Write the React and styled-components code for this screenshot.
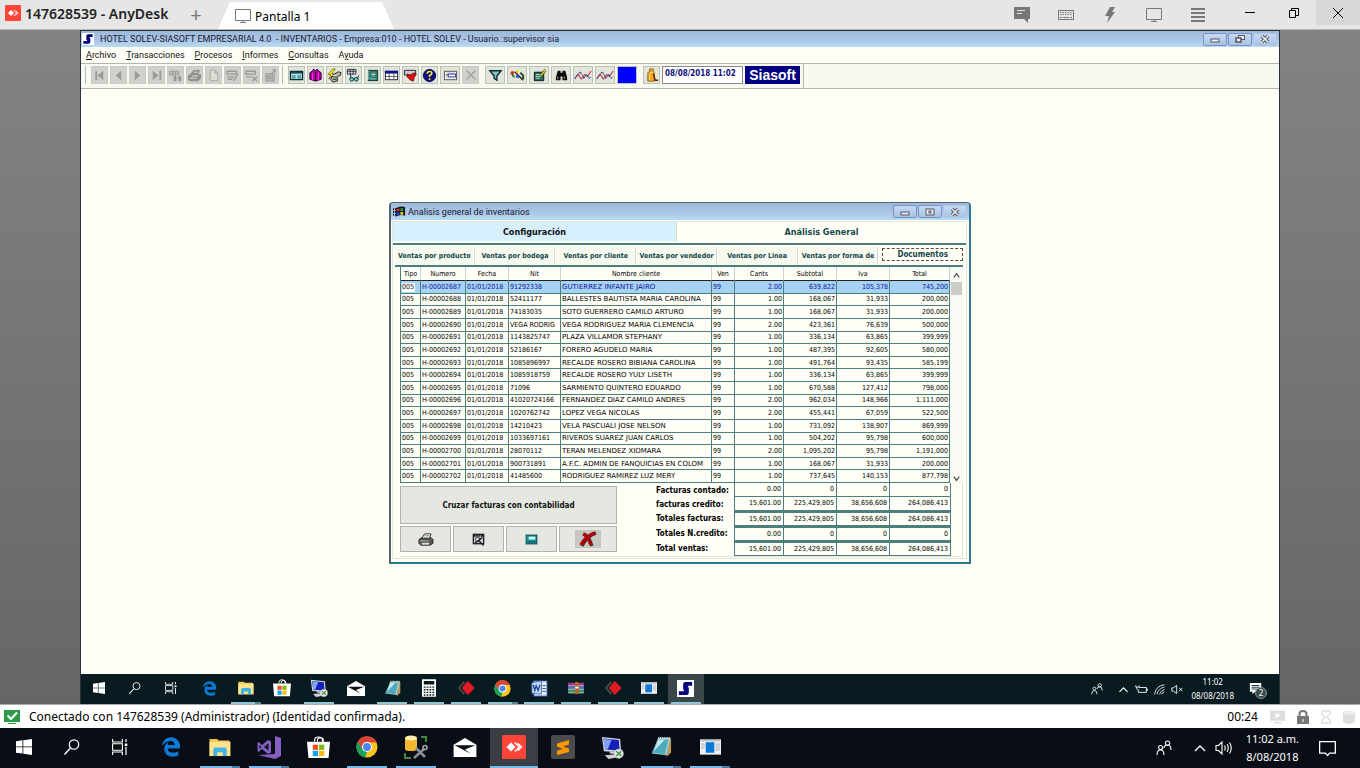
import React from 'react';
import styled, { createGlobalStyle, css } from 'styled-components';
import { FaEdgeLegacy } from 'react-icons/fa';

const ui = `"Noto Sans", "Open Sans", sans-serif`;
const caption = `Roboto, "Noto Sans", sans-serif`;
const tahoma = `"DejaVu Sans Condensed", "DejaVu Sans", sans-serif`;
const teal = '#4d807d';

const GlobalStyle = createGlobalStyle`
  * { box-sizing: border-box; }
  body { margin: 0; font-family: ${ui}; color: #000; }
  button { font: inherit; color: inherit; border: 0; padding: 0; background: none; }
  svg { display: block; }
`;

/* ---------- icons ---------- */

const shapes = {
  anydesk: ['0 0 16 16', <><rect width="16" height="16" rx="1" fill="#ff4438" /><path d="M6 5 9 8 6 11 3 8z" fill="#fff" /><path d="M8.500 5l3 3-3 3M10.500 5.500 13 8l-2.500 2.500" fill="none" stroke="#fff" strokeWidth=".9" /></>],
  monitor: ['0 0 16 16', <path d="M.5 1.500h15v11H.5zM8 12.500v2M5 14.500h6" fill="none" stroke="#777" />],
  chat: ['0 0 16 16', <><path d="M0 0h16v12h-2v4l-4-4H0z" fill="#777" /><path d="M3 3.500h8M3 6.500h5" stroke="#e5e5e5" /></>],
  keyboard: ['0 0 16 16', <><rect x=".5" y="3.500" width="15" height="9" fill="none" stroke="#777" /><path d="M2 5.500h12M2 7.500h12" stroke="#777" strokeDasharray="1.500 1" /><path d="M2 10.500h2m1 0h6m1 0h2" stroke="#777" /></>],
  bolt: ['0 0 16 16', <path d="M8 0h5l-3 5h3L5 16l2-7H3z" fill="#777" />],
  menu: ['0 0 16 16', <path d="M1 2h14M1 6h14M1 10h14M1 14h14" stroke="#777" strokeWidth="2" />],
  min: ['0 0 16 16', <path d="M3 7.500h10" stroke="#000" />],
  restore: ['0 0 16 16', <path d="M3.500 5.500h6v7h-6zM5.500 5.500v-2h7v7h-3" fill="none" stroke="#000" />],
  close: ['0 0 16 16', <path d="M3 3l10 10M13 3 3 13" stroke="#000" />],
  winMin: ['0 0 12 10', <rect x="2" y="5" width="8" height="3" fill="#eee" stroke="#556" />],
  winRestore: ['0 0 12 10', <><rect x="4.500" y="1.500" width="6" height="4" fill="#eee" stroke="#556" /><rect x="2" y="4" width="5" height="4" fill="#eee" stroke="#556" strokeWidth="1.500" /></>],
  winMax: ['0 0 12 10', <><rect x="2" y="2" width="8" height="6" fill="#eee" stroke="#556" /><rect x="5" y="4" width="2" height="2" fill="none" stroke="#556" /></>],
  winClose: ['0 0 12 10', <><path d="M3 2l6 6M9 2 3 8" stroke="#556" strokeWidth="3.500" /><path d="M3 2l6 6M9 2 3 8" stroke="#eee" strokeWidth="1.500" /></>],
  sia: ['0 0 18 18', <><rect width="18" height="18" fill="#fff" /><path d="M16 2H9Q6.500 2 6.500 4.500V9q0 1.500 1 2v1H2v4h7.500q3 0 3-3V9q0-1.500-1-2V6H16z" fill="#000080" /></>],
  flag: ['0 0 14 12', <><path d="M0 3h3M0 6h3M0 9h3" stroke="#111" strokeDasharray="1 1" strokeWidth="2" /><path d="M3 2q5-3 10-1v9q-5-2-10 1z" fill="#111" /><path d="M4 3l3-1v3H4z" fill="#e03020" /><path d="M8 2h3v3H8z" fill="#30a040" /><path d="M4 6h3v3L4 10z" fill="#2040d0" /><path d="M8 6h3v3H8z" fill="#e0d020" /></>],
  first: ['0 0 16 16', <><path d="M4.500 3v10" stroke="#999c96" strokeWidth="2" /><path d="M12 3v10L6 8z" fill="#999c96" /></>],
  prev: ['0 0 16 16', <path d="M11 3v10L5 8z" fill="#999c96" />],
  next: ['0 0 16 16', <path d="M5 3v10l6-5z" fill="#999c96" />],
  last: ['0 0 16 16', <><path d="M12 3v10" stroke="#999c96" strokeWidth="2" /><path d="M4 3v10l6-5z" fill="#999c96" /></>],
  gridFind: ['0 0 16 16', <><path d="M1.500 3.500h10v4h-10zM2 5.500h9M5 3v5M8 3v5" fill="none" stroke="#999c96" /><path d="M6 14V9l2-1 1 2h2l1-2 2 1v5h-3v-3H9v3z" fill="#999c96" /></>],
  gprint: ['0 0 16 16', <><path d="M1 8l3-2 3-4h7l-2 4 3 1v4l-3 3H3l-2-2z" fill="#8f928c" /><path d="M7.500 4.500h4M5 8.500h7M3 11h7" stroke="#e0e2da" /></>],
  page: ['0 0 16 16', <path d="M4.500 2.500h5l3 3v8h-8zM9.500 2.500v3h3" fill="#dcdfd6" stroke="#a4a7a0" />],
  gridEdit: ['0 0 16 16', <path d="M2 3.500h10v3H2zM2 9.500h8M3 12h5M14 6l-5 8" fill="none" stroke="#999c96" strokeWidth="1.500" />],
  gridDel: ['0 0 16 16', <path d="M2 3.500h10v3H2zM2 9.500h6M9 9l5 5M14 9l-5 5" fill="none" stroke="#999c96" strokeWidth="1.500" />],
  gridOut: ['0 0 16 16', <><path d="M3 6h9v8H3z" fill="#b8bbb4" stroke="#999c96" /><path d="M4 9h7M4 11h7" stroke="#85887f" strokeDasharray="1.500 1" /><path d="M9 6l4-4M10 2h3v3" stroke="#8c8f89" fill="none" /></>],
  card: ['0 0 16 16', <><path d="M1.500 3.500h13v9h-13z" fill="#a5e6e4" stroke="#123" strokeWidth="1.300" /><path d="M2 5h12" stroke="#1b4c50" strokeWidth="2" /><path d="M3 8.500h4M9 8.500h4M3 10.500h4M9 10.500h4" stroke="#156068" /></>],
  gift: ['0 0 16 16', <><path d="M2 5l3-2 1-2 2 2 2-2 1 2 3 2v7l-6 2-6-2z" fill="#b000a0" stroke="#300038" /><path d="M5 5v8M11 5v8" stroke="#ff40e8" /><path d="M8 4v10" stroke="#200020" /></>],
  handBolt: ['0 0 16 16', <><path d="M6 1 1 7h3l-2 5 6-6H5l4-5z" fill="#f4ec20" stroke="#54520c" strokeWidth=".7" /><path d="M7 7l5-3 3 1-1 3-3 1M5 9l6 1v4l-5 1-2-3z" fill="#b9b9aa" stroke="#222" /><path d="M6 12h4" stroke="#222" /></>],
  gridGlass: ['0 0 16 16', <><path d="M1.500 1.500h9v5h-9z" fill="#dde" stroke="#334" /><path d="M1 3.500h10M4.500 2v5M7.500 2v5M5 7v4" stroke="#334" /><circle cx="6" cy="12" r="2" fill="#6dd" stroke="#023" /><circle cx="11" cy="12" r="2" fill="#6dd" stroke="#023" /><path d="M12 11l2-3" stroke="#222" /></>],
  notebook: ['0 0 16 16', <><rect x="3.500" y="2.500" width="10" height="11" fill="#2f8c80" stroke="#10302c" /><path d="M3 3v10" stroke="#fff" strokeDasharray="1 1" strokeWidth="2" /><path d="M6.500 4.500h5v5h-5z" fill="#c8f0e0" stroke="#10302c" strokeWidth=".7" /><path d="M7 6h4M7 8h4" stroke="#247" strokeWidth=".7" /><path d="M6 11.500h6" stroke="#bfe" strokeDasharray="1 1" /></>],
  grid: ['0 0 16 16', <><rect x="1.500" y="3.500" width="13" height="9" fill="#fff" stroke="#223" /><path d="M1 4.500h14" stroke="#10108c" strokeWidth="3" /><path d="M2 9h12M5.500 6v6M10.500 6v6" stroke="#556" /></>],
  redDown: ['0 0 16 16', <><path d="M1.500 2.500h12v5h-12z" fill="#ccd" stroke="#222" /><path d="M5 6l2 2 5-3 2 2-2 3-1 4-3-1-4-4z" fill="#e01010" stroke="#500" strokeWidth=".7" /></>],
  help: ['0 0 16 16', <><circle cx="8" cy="8" r="6.500" fill="#0a1080" stroke="#000050" /><path d="M5.500 6.200q0-2.500 2.500-2.500t2.500 2.200Q10.500 7.200 8 8v1.700M8 11v1.700" fill="none" stroke="#ffee30" strokeWidth="1.700" /></>],
  form: ['0 0 16 16', <><rect x="1.500" y="3.500" width="13" height="9" fill="#eee" stroke="#555" /><path d="M4 5.500h8" stroke="#bbb" /><rect x="5.500" y="6.500" width="8" height="3" fill="#fff" stroke="#2030a0" /><path d="M3 7.500h2" stroke="#333" /></>],
  gcross: ['0 0 16 16', <path d="M3 3l10 10M13 3 3 13" stroke="#a4a8a0" strokeWidth="1.700" />],
  funnel: ['0 0 16 16', <path d="M2 3h12L9.500 8.500V13l-3-2V8.500z" fill="#7fc4bd" stroke="#102a35" strokeWidth="1.500" />],
  paint: ['0 0 16 16', <><path d="M1 5l3 4M5 4l9 9" stroke="#222" strokeWidth="1.500" /><circle cx="2.500" cy="5" r="1.800" fill="#e02020" /><circle cx="8" cy="4" r="1.700" fill="#e8e020" /><circle cx="8" cy="9" r="1.700" fill="#3050e0" /><path d="M11 5l3 3v4" stroke="#205020" fill="none" strokeWidth="2" /><circle cx="4" cy="9" r="1.300" fill="#30a040" /></>],
  noteBolt: ['0 0 16 16', <><path d="M2.500 4.500h10v9h-10z" fill="#276858" stroke="#112" /><path d="M4 7h6M4 9h6M4 11h4" stroke="#bfe8d8" /><path d="M14 1l-6 7 2 1 5-6" fill="#e8e020" stroke="#222" strokeWidth=".7" /></>],
  binoculars: ['0 0 16 16', <><path d="M4 3h3v2h2V3h3l2 7v3H9V9H7v4H2v-3z" fill="#0a0a0a" /><path d="M4 9v3M11 9v3" stroke="#9aa" /></>],
  wave: ['0 0 20 16', <><path d="M1 11l4-4 3 5 4-5 3 2 4-6" fill="none" stroke="#d04040" strokeWidth="1.300" /><path d="M1 12l2-4 4-4 4 7 3-4 3 4 2-1" fill="none" stroke="#3a4aa0" strokeWidth="1.200" strokeDasharray="2 .7" /></>],
  lighter: ['0 0 16 16', <><path d="M4 5l2-1V1h4v3l1 1v9H4z" fill="#f0a818" stroke="#6d4400" strokeWidth=".7" /><path d="M6 5h4M6 7v6" stroke="#ffe48a" /><path d="M10 6l2 7h3" stroke="#5a1c10" fill="none" strokeWidth="1.500" /></>],
  printer: ['0 0 18 16', <><path d="M2 8l3-2h10l2 2v4l-3 2H4l-2-2z" fill="#555" stroke="#222" /><path d="M5 7l3-5h7l-2 5z" fill="#f4f4f4" stroke="#333" /><path d="M8 4h5M7 6h5" stroke="#888" /><path d="M3 9.500h10" stroke="#bbb" /><path d="M5 12.500h8" stroke="#ddd" strokeWidth="2" /><path d="M9 9.500h2" stroke="#0c3" /><path d="M12 9.500h2" stroke="#d33" /></>],
  preview: ['0 0 16 16', <><rect x="2.500" y="2.500" width="11" height="10" fill="#cfcfd4" stroke="#1c1c24" strokeWidth="1.400" /><path d="M3 4h10" stroke="#1c1c24" strokeWidth="2" strokeDasharray="2 .6" /><circle cx="7" cy="8" r="2.300" fill="#eee" stroke="#222" /><path d="M8.500 9.500l5 5M4 12l8-6" stroke="#222" strokeWidth="1.500" /></>],
  calcTeal: ['0 0 16 16', <><rect x="1" y="2" width="14" height="12" fill="#b4c6c6" /><rect x="2.500" y="3.500" width="11" height="9" fill="#189a9a" stroke="#0c4c58" /><rect x="5" y="5" width="7" height="3" fill="#d4fff8" /><path d="M4 10.500h8" stroke="#024" strokeDasharray="2 1" /></>],
  redX: ['0 0 26 18', <><rect width="26" height="18" fill="#c6c7c2" /><path d="M7 16Q12 6 21 3M9 4q5 2 8 12" fill="none" stroke="#333" strokeWidth="3" /><path d="M6 15Q11 6 20 3M8 4q5 2 8 11" fill="none" stroke="#a80808" strokeWidth="3.500" /></>],
  windows: ['0 0 16 16', <path d="M0 2.200 6.500 1.300v6.200H0zM7.300 1.200 16 0v7.500H7.300zM0 8.300h6.500v6.200L0 13.700zM7.300 8.300H16V16l-8.700-1.200z" fill="#fff" />],
  search: ['0 0 16 16', <><circle cx="10" cy="5.500" r="4.700" fill="none" stroke="#fff" strokeWidth="1.200" /><path d="M6.500 9 .5 15.500" stroke="#fff" strokeWidth="1.400" /></>],
  taskview: ['0 0 16 16', <><path d="M.6 0v3h9.800V0M.6 16v-3h9.800v3M.6 4.800h9.800v6.400H.6z" fill="none" stroke="#fff" strokeWidth="1.100" /><path d="M14 0v3M14 8v8" stroke="#fff" strokeWidth="1.200" /><rect x="12.800" y="4.500" width="2.500" height="2.500" fill="#fff" /></>],
  folder: ['0 0 22 20', <><path d="M0 1h8l1.500 1.500H21V19H0z" fill="#f5c84c" /><path d="M0 4h22v15H0z" fill="#ffe38f" /><path d="M4 19v-7q0-2 2-2h10q2 0 2 2v7h-4v-4H8v4z" fill="#3db3e8" /></>],
  vs: ['0 0 24 24', <><path d="M18 1l6 2v18l-6 3L1 20l17-1z" fill="#865fc5" /><path d="M1.500 7 5 10l6-5 3 1.500v11L11 19l-6-5-3.500 3L.5 16V8zM2.500 10v4l2-2zM7 12l4.500 3.500v-7z" fill="#865fc5" fillRule="evenodd" /></>],
  store: ['0 0 24 24', <><path d="M8 6V4q0-3 4-3t4 3v2M11 6V4q0-2 3-2t3 2v2" fill="none" stroke="#fff" strokeWidth="1.200" /><path d="M0 6h24l-1.500 17H1.500z" fill="#fff" /><path d="M6 9h5.500v5.500H6z" fill="#f25022" /><path d="M12.500 9H18v5.500h-5.500z" fill="#7fba00" /><path d="M6 15.500h5.500V21H6z" fill="#00a4ef" /><path d="M12.500 15.500H18V21h-5.500z" fill="#ffb900" /></>],
  chrome: ['0 0 24 24', <><circle cx="12" cy="12" r="11.500" fill="#fbc61c" /><path d="M2 6.200A11.500 11.500 0 0 1 22.500 7H12L7 15z" fill="#dc4437" /><path d="M2 6.200 7.300 15 12 17l-1.800 6.400A11.500 11.500 0 0 1 2 6.200z" fill="#1aa15f" /><circle cx="12" cy="12" r="5.500" fill="#fff" /><circle cx="12" cy="12" r="4.300" fill="#4587f4" /></>],
  dbTools: ['0 0 24 24', <><path d="M1 3v11q0 2 6 2t6-2V3z" fill="#f6b830" /><ellipse cx="7" cy="3" rx="6" ry="2.500" fill="#fff0b0" /><path d="M17 2h5v5M1 18v5h6" fill="none" stroke="#3c8c3c" strokeWidth="2" /><path d="M10 23l10-9M12 13l9 9" stroke="#8c9094" strokeWidth="2.500" /><circle cx="21" cy="12.500" r="2" fill="none" stroke="#a8acb0" strokeWidth="1.500" /></>],
  mail: ['0 0 24 20', <><path d="M0 7l12-7 12 7v13H0z" fill="#fff" /><path d="M1 7.500h22L12 12l6 4.500z" fill="#0a0f16" /></>],
  sublime: ['0 0 24 24', <><rect width="24" height="24" rx="2" fill="#4b4b4b" /><path d="M18 5v4.500l-6 2 6 2v3.500L6 20v-4.300l6-2-6-2V8.500z" fill="#ff9800" /></>],
  putty: ['0 0 24 24', <><path d="M1 1l19 2 1 14-18-1z" fill="#d3d6de" /><path d="M2.500 2.500l16 1.700 1 11-15-1z" fill="#1420b8" /><path d="M3 3l8 1-4 10-3-.3z" fill="#7fa2f4" /><path d="M9 16l6 1v2l-6-1zM4 20l12-1 3 3-11 2z" fill="#d0d2d4" /><circle cx="18.500" cy="18.500" r="5" fill="#dfe9dd" stroke="#aaa" strokeWidth=".5" /><path d="M16 16l2.500 2.500L16 21M21 16l-2 2 2 3" fill="none" stroke="#3c8c3c" strokeWidth="1.400" /></>],
  notepad: ['0 0 24 24', <><path d="M20 2l3 1v15l-5 5z" fill="#b99a5a" /><path d="M9 2h13l-4 19-16-2z" fill="#9ed0d8" /><path d="M9 4h11l-4 16-14-2z" fill="#4fa9bc" /><path d="M9 4h7L4 17z" fill="#c3e6ea" /><path d="M9 2h13" stroke="#ddd" strokeWidth="2" strokeDasharray="1 1" /></>],
  appWin: ['0 0 22 16', <><rect width="22" height="16" fill="#f1f1f1" /><path d="M1 1.500h20" stroke="#9ab" /><rect x="6" y="3" width="9" height="11" fill="#0a78d6" /><path d="M1 5h4M1 7h4M1 9h4M16 5h5M16 7h5M16 9h5M16 11h5" stroke="#99a" strokeWidth=".7" /></>],
  calc: ['0 0 16 20', <><rect width="16" height="20" fill="#fff" /><path d="M2 2h12v4H2z" fill="#071a1e" /><path d="M2 9h12M2 12h12M2 15h12M2 18h12" stroke="#071a1e" strokeWidth="1.700" strokeDasharray="2 1.300" /></>],
  redDiamond: ['0 0 20 16', <><path d="M8 1 2 8l6 7" fill="none" stroke="#4b4b4b" strokeWidth="2" /><path d="M12 0l8 8-8 8-7-8z" fill="#e01b24" /></>],
  word: ['0 0 18 18', <><rect x="3" y="1" width="14" height="16" fill="#e8f1fc" stroke="#2a5699" /><path d="M12 6h4M12 9h4M12 12h4" stroke="#2a5699" /><path d="M1 3l10-2v14L1 14z" fill="#c9dcf6" stroke="#4a76b9" /><path d="M2.500 5l1.500 6L5.500 6l2 5L9.500 5" fill="none" stroke="#204f9a" strokeWidth="1.500" /></>],
  winrar: ['0 0 20 16', <><path d="M1 2h18v4H1z" fill="#a13a8c" /><path d="M1 6h18v4H1z" fill="#5a6fb8" /><path d="M1 10h18v4H1z" fill="#3a9658" /><path d="M1 5.500h18M1 9.500h18M1 13.500h18" stroke="#ddd" strokeWidth=".8" /><path d="M9 1h4v14H9z" fill="#b5642a" /><path d="M9 7.500h4" stroke="#ffe" strokeWidth="2" /></>],
  people: ['0 0 16 16', <path d="M1 15q0-5 3.500-5t3.500 5M8 8q0-3 3.500-3T15 10M4.500 5.500a2 2 0 1 0 .1 4 2 2 0 1 0-.1-4zM11.500 1a2.200 2.200 0 1 0 .1 4.400 2.200 2.200 0 1 0-.1-4.400z" fill="none" stroke="#fff" strokeWidth="1.100" />],
  chevron: ['0 0 16 16', <path d="M3 11l5-5 5 5" fill="none" stroke="#fff" strokeWidth="1.400" />],
  battery: ['0 0 16 16', <path d="M5 5.500h9v6H4v-3M14 7.500h1.500v2M1 3v2h4V3M2 5v2q0 1 2 1" fill="none" stroke="#fff" strokeWidth="1.100" />],
  wifi: ['0 0 16 16', <path d="M2 14Q3 4 14 2M5 14q1-7 9-9M8 14q1-4 6-6M11 14q0-2 3-3" fill="none" stroke="#ddd" strokeWidth="1.200" />],
  mute: ['0 0 16 16', <path d="M1 6h2l4-3v10l-4-3H1zM10 6l4 4M14 6l-4 4" fill="none" stroke="#fff" strokeWidth="1.100" />],
  sound: ['0 0 18 16', <path d="M1 5.500h2.500L7 2v12l-3.500-3.500H1zM9.500 5.500q1.500 2.500 0 5M12 4q2.500 4 0 8M14.500 2.500q3.500 5.500 0 11" fill="none" stroke="#fff" strokeWidth="1.100" />],
  bubble: ['0 0 16 16', <path d="M.6 1.600h14.800v10.800H10l-2 2.200-2-2.200H.6z" fill="none" stroke="#fff" strokeWidth="1.200" />],
  notes: ['0 0 16 16', <><path d="M1 1h13v10H7l-3 3v-3H1z" fill="#fff" /><path d="M3 4h9M3 6h9M3 8h6" stroke="#0b2226" /></>],
  check: ['0 0 16 14', <><rect width="16" height="12" fill="#2d9a47" /><path d="M4 14h8" stroke="#2d9a47" strokeWidth="2" /><path d="M3.500 5.500 7 9l6-6.500" fill="none" stroke="#fff" strokeWidth="2" /></>],
  play: ['0 0 16 14', <><path d="M0 0h16v11H0zM4 12h8v2H4z" fill="#dedede" /><path d="M6 2.500l5 3-5 3z" fill="#fff" /></>],
  lock: ['0 0 12 14', <><path d="M2.500 7V4q0-3 3.500-3t3.500 3v3" fill="none" stroke="#777" strokeWidth="2" /><path d="M0 6h12v8H0z" fill="#777" /><path d="M6 9v3" stroke="#fff" /></>],
  hourglass: ['0 0 10 14', <path d="M1 1h8v3L6 7l3 3v3H1v-3l3-3-3-3z" fill="none" stroke="#dedede" strokeWidth="1.400" />],
  disk: ['0 0 12 14', <><path d="M0 3v9q6 4 12 0V3z" fill="#dedede" /><ellipse cx="6" cy="3" rx="6" ry="2" fill="#eee" stroke="#ddd" strokeWidth=".5" /></>],
  up: ['0 0 10 10', <path d="M2 7l3-4 3 4" fill="none" stroke="#555" strokeWidth="1.500" />],
  down: ['0 0 10 10', <path d="M2 3l3 4 3-4" fill="none" stroke="#555" strokeWidth="1.500" />],
};

function Icon({ name, w = 16, h = w }) {
  if (name === 'edge') return <FaEdgeLegacy size={w} color="#0a7ad8" aria-hidden="true" />;
  const [box, art] = shapes[name];
  return <svg width={w} height={h} viewBox={box} aria-hidden="true">{art}</svg>;
}

/* ---------- page frame ---------- */

const Page = styled.div`
  min-height: 100vh;
  display: flex;
  flex-direction: column;
`;

const TopBar = styled.header`
  height: 30px;
  display: flex;
  align-items: stretch;
  background: #e6e6e6;
  border-bottom: 1px solid #b4b8b4;
`;

const AppTitle = styled.h1`
  margin: 0;
  width: 185px;
  padding: 0 0 3px 5px;
  display: flex;
  align-items: center;
  gap: 4px;
  font-size: 14px;
  font-weight: 600;
  color: #222;
  white-space: nowrap;
`;

const AddTab = styled.button`
  width: 22px;
  margin-right: 11px;
  font-size: 20px;
  line-height: 28px;
  color: #777;
`;

const SessionTab = styled.button`
  width: 176px;
  margin-top: 2px;
  padding: 1px 0 0 17px;
  display: flex;
  align-items: center;
  gap: 4px;
  background: #fff;
  clip-path: polygon(12px 0, 164px 0, 100% 100%, 0 100%);
  font-size: 12px;
`;

const TopTools = styled.div`
  margin-left: auto;
  display: flex;
  align-items: center;
  gap: 28px;
  padding-right: 22px;
`;

const WindowButton = styled.button`
  width: 44px;
  height: 25px;
  display: grid;
  place-items: center;
  background: ${(p) => (p.$shade ? '#d8d8d8' : 'transparent')};
`;

const Stage = styled.main`
  flex: 1;
  display: flex;
  padding: 0 80px;
  background: linear-gradient(#838383, #666);
`;

const Remote = styled.section`
  flex: 1;
  min-width: 0;
  display: flex;
  flex-direction: column;
  border: 1px solid #2a3438;
  border-bottom: 0;
  background: #fffff7;
`;

const Caption = styled.div`
  height: ${(p) => p.$h}px;
  padding: 0 2px 0 ${(p) => p.$start}px;
  display: flex;
  align-items: center;
  gap: ${(p) => p.$gap}px;
  background: linear-gradient(#9cb9d8, #aec6ea 60%, #b4dcee);
  font: 9px/12px ${caption};
  color: #15202c;
  white-space: pre;
`;

const CaptionButtons = styled.div`
  margin-left: auto;
  display: flex;
  gap: 1px;
`;

const CaptionButton = styled.button`
  width: 24px;
  height: 13px;
  display: grid;
  place-items: center;
  border: 1px solid ${(p) => (p.$soft ? '#b3c2ea' : '#7d90c4')};
  border-radius: 2px;
  background: linear-gradient(#c5d9f3, #a8c3e4);
`;

const MenuBar = styled.nav`
  height: 16px;
  padding-left: 5px;
  display: flex;
  align-items: center;
  gap: 10px;
  font: 9px/12px ${caption};
  a { color: #111; text-decoration: none; }
`;

const ToolBar = styled.div`
  height: 26px;
  display: flex;
  align-items: center;
  gap: 3px;
  padding: 0 0 2px 4px;
  background: #f7faf0;
  border-top: 1px solid #b3b8ae;
  border-bottom: 1px solid #b3b8ae;
`;

const ToolGroup = styled.div`
  display: flex;
  gap: 2px;
  height: 18px;
  padding-left: 5px;
  border-left: 1px solid #b7bbb0;
`;

const LooseGroup = styled(ToolGroup)`
  border-left: 0;
  padding-left: 3px;
`;

const ToolButton = styled.button`
  width: ${(p) => (p.$wide ? 20 : 17)}px;
  height: 18px;
  display: grid;
  place-items: center;
  background: ${(p) => (p.disabled ? '#cfd2ca' : p.$fill || '#e2e6da')};
  border: 1px solid ${(p) => (p.disabled ? '#c9ccc4' : '#bcc2b6')};
`;

const Clock = styled.input`
  width: 81px;
  height: 18px;
  padding: 0 1px 3px 2px;
  border: 1px solid #888;
  background: #fff;
  color: #10107c;
  font: bold 8px ${tahoma};
`;

const Brand = styled.div`
  width: 55px;
  height: 18px;
  background: #000080;
  color: #fff;
  text-align: center;
  font: bold 14px/18px "Liberation Sans", sans-serif;
`;

const BarEnd = styled.div`
  align-self: stretch;
  width: 1px;
  margin: 0 0 -2px;
  background: #b3b8ae;
`;

const Workspace = styled.div`
  flex: 1;
  min-height: 480px;
  position: relative;
`;

/* ---------- inventory window ---------- */

const Dialog = styled.section`
  position: absolute;
  left: 308px;
  top: 113px;
  width: 582px;
  border: 1px solid #50666c;
  border-width: 1px 2px 2px;
  border-radius: 4px 4px 0 0;
  border-right-color: #2c7890;
  border-bottom-color: #2c7890;
  background: #fffff7;
  overflow: hidden;
  font-family: ${tahoma};
`;

const DialogBody = styled.div`
  margin: 1px 2px 3px 1px;
  padding-bottom: 1px;
  border: 1px solid #e0e6d8;
`;

const TabRow = styled.div`
  display: flex;
  height: 23px;
  border-bottom: 2px solid ${teal};
`;

const MainTab = styled.button`
  flex: 1;
  height: 19px;
  font-size: 9px;
  font-weight: bold;
  ${(p) => (p.$active
    ? css`color: #14474a;`
    : css`flex: 0 0 284px; background: #d6f0fd; color: #111; border-right: 1px solid #d6dad0;`)}
`;

const SubTabRow = styled(TabRow)`
  margin: 1px 3px 0 2px;
  height: 21px;
  gap: 1px;
`;

const SubTab = styled.button`
  flex: 1 1 0;
  min-width: 0;
  height: 18px;
  margin-top: 1px;
  overflow: hidden;
  white-space: nowrap;
  font-size: 7px;
  font-weight: bold;
  color: #14474a;
  background: #f5f9ee;
  border-right: 1px solid #d8dcd0;
  ${(p) => p.$active && css`
    margin: 2px 0 0 3px;
    height: 13px;
    font-size: 8px;
    background: none;
    border: 1px dashed #5a4a4a;
    line-height: 10px;
  `}
`;

const Grid = styled.div`
  margin: 0 3px 0 7px;
  display: flex;
`;

const DataTable = styled.table`
  width: 550px;
  height: 216px;
  table-layout: fixed;
  border-collapse: separate;
  border-spacing: 0;
  border-left: 1px solid ${teal};
  font-size: 7px;
  line-height: 9px;
  th {
    height: 14px;
    padding: 1px 0 0;
    font-weight: normal;
    border-right: 1px solid #c9d6d0;
    border-bottom: 1px solid #222;
  }
  td {
    padding: 1px 1px 0;
    border-right: 1px solid ${teal};
    border-bottom: 1px solid ${teal};
    overflow: hidden;
    white-space: nowrap;
  }
  td:nth-child(5) { font-family: "DejaVu Sans", sans-serif; }
  td:nth-child(n + 7) { text-align: right; }
`;

const DataRow = styled.tr`
  ${(p) => p.$selected && css`background: #a6d3f3; color: #1010a0;`}
`;

const TypeInput = styled.input`
  display: block;
  width: 13px;
  height: 9px;
  padding: 0;
  border: 0;
  background: #fff;
  font: inherit;
  color: #111;
`;

const ScrollBar = styled.div`
  width: 13px;
  padding-top: 4px;
  display: flex;
  flex-direction: column;
  align-items: center;
  background: #fafaf4;
`;

const Thumb = styled.div`
  width: 11px;
  height: 13px;
  margin: 2px 0 auto;
  background: #cdcdc8;
`;

const Footer = styled.div`
  margin: 0 3px 0 7px;
  display: flex;
  justify-content: space-between;
  padding-right: 11px;
  border: 1px solid #e2e6da;
  border-width: 0 1px 1px 0;
`;

const Actions = styled.div`
  width: 217px;
  padding-top: 3px;
  display: grid;
  grid-template-columns: repeat(3, 51px) 1fr;
  align-content: start;
  gap: 2px;
`;

const ActionButton = styled.button`
  height: ${(p) => (p.$main ? 38 : 26)}px;
  display: grid;
  place-items: center;
  border: 1px solid #b0b3ab;
  background: #e5e8e0;
  font-size: 8px;
  font-weight: bold;
  color: #111;
  ${(p) => p.$main && css`grid-column: 1 / -1;`}
`;

const Totals = styled.table`
  width: 295px;
  table-layout: fixed;
  border-collapse: separate;
  border-spacing: 0;
  font-size: 7px;
  line-height: 9px;
  th { padding: 0; text-align: left; font-size: 8px; white-space: nowrap; border-right: 1px solid ${teal}; }
  td { padding: 0 2px 0 0; text-align: right; border-right: 1px solid ${teal}; border-bottom: 1px solid ${teal}; }
`;

const TotalRow = styled.tr`
  height: ${(p) => (p.$group ? 15 : 14)}px;
  td { ${(p) => p.$group && css`border-top: 2px solid ${teal};`} }
`;

/* ---------- bars at the bottom ---------- */

const TaskBar = styled.footer`
  height: ${(p) => (p.$small ? 30 : 40)}px;
  display: flex;
  background: ${(p) => (p.$small ? '#071b20' : '#090d15')};
  color: #fff;
`;

const SystemKeys = styled.div`
  display: flex;
  width: ${(p) => (p.$small ? 110 : 147)}px;
`;

const TaskApps = styled.div`
  display: flex;
  justify-content: space-between;
  width: ${(p) => (p.$small ? 513 : 587)}px;
`;

const TaskButton = styled.button`
  width: ${(p) => (p.$small ? 36 : 48)}px;
  height: 100%;
  padding: ${(p) => (p.$small ? '0 3px' : p.$active ? '0' : '0 4px')};
  display: grid;
  grid-template-rows: 1fr 2px;
  place-items: center;
  background: ${(p) => (p.$active ? (p.$small ? '#3a4648' : '#3b3e44') : 'none')};
  &::after {
    content: '';
    justify-self: stretch;
    height: 2px;
    background: ${(p) => {
    if (!p.$open) return 'transparent';
    const [on, more] = p.$small ? ['#8fc6d4', '#5d8893'] : ['#76b9ed', '#4c7aa0'];
    return p.$open === 2 ? `linear-gradient(90deg, ${on} 80%, ${more} 80%)` : on;
  }};
  }
`;

const Tray = styled.div`
  margin-left: auto;
  display: flex;
  align-items: center;
  gap: ${(p) => p.$gap}px;
  padding-right: ${(p) => p.$end}px;
`;

const TrayPeople = styled.span`
  margin-right: ${(p) => (p.$small ? 9 : 13)}px;
`;

const TrayTime = styled.time`
  text-align: center;
  font-size: ${(p) => (p.$small ? 8 : 11)}px;
  line-height: ${(p) => (p.$small ? 14 : 18)}px;
  padding: ${(p) => (p.$small ? '0 10px 0 2px' : '0 13px 0 6px')};
`;

const Notice = styled.span`
  position: relative;
`;

const Badge = styled.span`
  position: absolute;
  left: 6px;
  top: 5px;
  width: 12px;
  height: 12px;
  border-radius: 50%;
  background: #3b4a4c;
  border: 1px solid #8a9494;
  font: 8px/10px ${ui};
  text-align: center;
`;

const StatusBar = styled.div`
  height: 24px;
  display: flex;
  align-items: center;
  gap: 9px;
  padding: 0 5px 0 4px;
  background: #fff;
  border-top: 1px solid #aaa;
  font-size: 12px;
`;

const StatusEnd = styled.div`
  margin-left: auto;
  display: flex;
  align-items: center;
  gap: 12px;
`;

/* ---------- data ---------- */

const columns = [
  ['Tipo', 20], ['Numero', 45], ['Fecha', 43], ['Nit', 52], ['Nombre cliente', 151],
  ['Ven', 23], ['Cants', 49], ['Subtotal', 53], ['Iva', 53], ['Total', 60],
];

const sales = [
  ['91292338', 'GUTIERREZ INFANTE JAIRO', '2.00', '639,822', '105,378', '745,200'],
  ['52411177', 'BALLESTES BAUTISTA MARIA CAROLINA', '1.00', '168,067', '31,933', '200,000'],
  ['74183035', 'SOTO GUERRERO CAMILO ARTURO', '1.00', '168,067', '31,933', '200,000'],
  ['VEGA RODRIG', 'VEGA RODRIGUEZ MARIA CLEMENCIA', '2.00', '423,361', '76,639', '500,000'],
  ['1143825747', 'PLAZA VILLAMOR STEPHANY', '1.00', '336,134', '63,865', '399,999'],
  ['52186167', 'FORERO AGUDELO MARIA', '1.00', '487,395', '92,605', '580,000'],
  ['1085896997', 'RECALDE ROSERO BIBIANA CAROLINA', '1.00', '491,764', '93,435', '585,199'],
  ['1085918759', 'RECALDE ROSERO YULY LISETH', '1.00', '336,134', '63,865', '399,999'],
  ['71096', 'SARMIENTO QUINTERO EDUARDO', '1.00', '670,588', '127,412', '798,000'],
  ['41020724166', 'FERNANDEZ DIAZ CAMILO ANDRES', '2.00', '962,034', '148,966', '1,111,000'],
  ['1020762742', 'LOPEZ VEGA NICOLAS', '2.00', '455,441', '67,059', '522,500'],
  ['14210423', 'VELA PASCUALI JOSE NELSON', '1.00', '731,092', '138,907', '869,999'],
  ['1033697161', 'RIVEROS SUAREZ JUAN CARLOS', '1.00', '504,202', '95,798', '600,000'],
  ['28070112', 'TERAN MELENDEZ XIOMARA', '2.00', '1,095,202', '95,798', '1,191,000'],
  ['900731891', 'A.F.C. ADMIN DE FANQUICIAS EN COLOM', '1.00', '168,067', '31,933', '200,000'],
  ['41485600', 'RODRIGUEZ RAMIREZ LUZ MERY', '1.00', '737,645', '140,153', '877,798'],
];

const totals = [
  ['Facturas contado:', false, '0.00', '0', '0', '0'],
  ['facturas credito:', false, '15,601.00', '225,429,805', '38,656,608', '264,086,413'],
  ['Totales facturas:', true, '15,601.00', '225,429,805', '38,656,608', '264,086,413'],
  ['Totales N.credito:', true, '0.00', '0', '0', '0'],
  ['Total ventas:', true, '15,601.00', '225,429,805', '38,656,608', '264,086,413'],
];

const subTabs = ['Ventas por producto', 'Ventas por bodega', 'Ventas por cliente', 'Ventas por vendedor', 'Ventas por Linea', 'Ventas por forma de', 'Documentos'];
const recordTools = ['first', 'prev', 'next', 'last', 'gridFind', 'gprint', 'page', 'gridEdit', 'gridDel', 'gridOut'];
const moduleTools = ['card', 'gift', 'handBolt', 'gridGlass', 'notebook', 'grid', 'redDown', 'help'];
const viewTools = ['funnel', 'paint', 'noteBolt', 'binoculars', 'wave', 'wave'];

const remoteApps = [
  ['edge', 0, 15], ['folder', 2, 16, 14], ['store', 0, 18], ['putty', 1, 18], ['mail', 0, 18, 15], ['notepad', 1, 17],
  ['calc', 1, 14, 18], ['redDiamond', 1, 18, 14], ['chrome', 2, 17], ['word', 1, 17], ['winrar', 1, 18, 14],
  ['redDiamond', 1, 18, 14], ['appWin', 1, 16, 12], ['sia', 1, 17],
];
const localApps = [
  ['edge', 0, 20], ['folder', 2, 22, 19], ['vs', 2, 24], ['store', 0, 23], ['chrome', 1, 22], ['dbTools', 1, 24],
  ['mail', 0, 24, 19], ['anydesk', 1, 24], ['sublime', 0, 24], ['putty', 0, 23], ['notepad', 2, 22], ['appWin', 2, 21, 16],
];

function TaskButtons({ apps, small, activeIndex }) {
  return (
    <TaskApps $small={small}>
      {apps.map(([name, open, w, h], i) => (
        <TaskButton key={i} $small={small} $open={open} $active={i === activeIndex} aria-label={name}>
          <Icon name={name} w={w} h={h} />
        </TaskButton>
      ))}
    </TaskApps>
  );
}

function SystemButtons({ small }) {
  const s = small ? 12 : 16;
  return (
    <SystemKeys $small={small}>
      {['windows', 'search', 'taskview'].map((n) => (
        <TaskButton key={n} $small={small} aria-label={n}><Icon name={n} w={s} /></TaskButton>
      ))}
    </SystemKeys>
  );
}

function InventoryDialog() {
  return (
    <Dialog aria-label="Analisis general de inventarios">
      <Caption as="header" $h={17} $gap={2} $start={2}>
        <Icon name="flag" w={13} h={12} />
        Analisis general de inventarios
        <CaptionButtons>
          <CaptionButton aria-label="Minimizar"><Icon name="winMin" w={12} h={10} /></CaptionButton>
          <CaptionButton aria-label="Maximizar"><Icon name="winMax" w={12} h={10} /></CaptionButton>
          <CaptionButton $soft aria-label="Cerrar"><Icon name="winClose" w={12} h={10} /></CaptionButton>
        </CaptionButtons>
      </Caption>
      <DialogBody>
        <TabRow>
          <MainTab>Configuración</MainTab>
          <MainTab $active>Análisis General</MainTab>
        </TabRow>
        <SubTabRow>
          {subTabs.map((t) => <SubTab key={t} $active={t === 'Documentos'}>{t}</SubTab>)}
        </SubTabRow>
        <Grid>
          <DataTable>
            <colgroup>{columns.map(([n, w]) => <col key={n} width={w} />)}</colgroup>
            <thead><tr>{columns.map(([n]) => <th key={n}>{n}</th>)}</tr></thead>
            <tbody>
              {sales.map(([nit, name, ...sums], i) => (
                <DataRow key={nit} $selected={i === 0}>
                  <td>{i === 0 ? <TypeInput aria-label="Tipo" defaultValue="005" /> : '005'}</td>
                  <td>{`H-0000${2687 + i}`}</td>
                  <td>01/01/2018</td>
                  <td>{nit}</td>
                  <td>{name}</td>
                  <td>99</td>
                  {sums.map((v, k) => <td key={k}>{v}</td>)}
                </DataRow>
              ))}
            </tbody>
          </DataTable>
          <ScrollBar>
            <Icon name="up" w={9} />
            <Thumb />
            <Icon name="down" w={9} />
          </ScrollBar>
        </Grid>
        <Footer>
          <Actions>
            <ActionButton $main>Cruzar facturas con contabilidad</ActionButton>
            <ActionButton aria-label="Imprimir"><Icon name="printer" w={17} h={15} /></ActionButton>
            <ActionButton aria-label="Vista previa"><Icon name="preview" w={15} /></ActionButton>
            <ActionButton aria-label="Calculadora"><Icon name="calcTeal" w={15} /></ActionButton>
            <ActionButton aria-label="Salir"><Icon name="redX" w={26} h={18} /></ActionButton>
          </Actions>
          <Totals>
            <colgroup>{[79, 49, 53, 53, 61].map((w, i) => <col key={i} width={w} />)}</colgroup>
            <tbody>
              {totals.map(([label, group, ...vals]) => (
                <TotalRow key={label} $group={group}>
                  <th scope="row">{label}</th>
                  {vals.map((v, i) => <td key={i}>{v}</td>)}
                </TotalRow>
              ))}
            </tbody>
          </Totals>
        </Footer>
      </DialogBody>
    </Dialog>
  );
}

export default function App() {
  return (
    <Page>
      <GlobalStyle />
      <TopBar>
        <AppTitle><Icon name="anydesk" w={16} />147628539 - AnyDesk</AppTitle>
        <AddTab aria-label="Nueva sesión">+</AddTab>
        <SessionTab><Icon name="monitor" w={16} />Pantalla 1</SessionTab>
        <TopTools>
          {['chat', 'keyboard', 'bolt', 'monitor', 'menu'].map((n) => (
            <button key={n} aria-label={n}><Icon name={n} w={16} /></button>
          ))}
        </TopTools>
        <WindowButton aria-label="Minimizar"><Icon name="min" /></WindowButton>
        <WindowButton aria-label="Restaurar"><Icon name="restore" /></WindowButton>
        <WindowButton $shade aria-label="Cerrar"><Icon name="close" /></WindowButton>
      </TopBar>

      <Stage>
        <Remote>
          <Caption $h={16} $gap={6} $start={1}>
            <Icon name="sia" w={12} />
            {'HOTEL SOLEV-SIASOFT EMPRESARIAL 4.0  - INVENTARIOS - Empresa:010 - HOTEL SOLEV - Usuario.:supervisor sia'}
            <CaptionButtons>
              <CaptionButton aria-label="Minimizar"><Icon name="winMin" w={12} h={10} /></CaptionButton>
              <CaptionButton aria-label="Restaurar"><Icon name="winRestore" w={12} h={10} /></CaptionButton>
              <CaptionButton $soft aria-label="Cerrar"><Icon name="winClose" w={12} h={10} /></CaptionButton>
            </CaptionButtons>
          </Caption>
          <MenuBar>
            {['Archivo', 'Transacciones', 'Procesos', 'Informes', 'Consultas'].map((m) => (
              <a key={m} href="#menu"><u>{m[0]}</u>{m.slice(1)}</a>
            ))}
            <a href="#menu">A<u>y</u>uda</a>
          </MenuBar>
          <ToolBar>
            <ToolGroup>
              {recordTools.map((n) => <ToolButton key={n} disabled aria-label={n}><Icon name={n} w={15} /></ToolButton>)}
            </ToolGroup>
            <ToolGroup>
              {moduleTools.map((n) => <ToolButton key={n} aria-label={n}><Icon name={n} w={15} /></ToolButton>)}
              <ToolButton $wide aria-label="form"><Icon name="form" w={15} /></ToolButton>
              <ToolButton disabled aria-label="cerrar"><Icon name="gcross" w={14} /></ToolButton>
            </ToolGroup>
            <LooseGroup>
              {viewTools.map((n, i) => <ToolButton key={i} $wide aria-label={n}><Icon name={n} w={n === 'wave' ? 18 : 15} h={15} /></ToolButton>)}
              <ToolButton $wide $fill="#0000ff" aria-label="color" />
            </LooseGroup>
            <LooseGroup>
              <ToolButton aria-label="encendedor"><Icon name="lighter" w={15} /></ToolButton>
              <Clock aria-label="Fecha y hora" defaultValue="08/08/2018 11:02" />
              <Brand>Siasoft</Brand>
            </LooseGroup>
            <BarEnd />
          </ToolBar>
          <Workspace><InventoryDialog /></Workspace>
          <TaskBar as="div" $small>
            <SystemButtons small />
            <TaskButtons apps={remoteApps} small activeIndex={13} />
            <Tray $gap={5} $end={16}>
              <TrayPeople $small><Icon name="people" w={12} /></TrayPeople>
              <Icon name="chevron" w={13} />
              <Icon name="battery" w={13} />
              <Icon name="wifi" w={13} />
              <Icon name="mute" w={13} />
              <TrayTime $small>11:02<br />08/08/2018</TrayTime>
              <Notice><Icon name="notes" w={14} /><Badge>2</Badge></Notice>
            </Tray>
          </TaskBar>
        </Remote>
      </Stage>

      <StatusBar>
        <Icon name="check" w={16} h={14} />
        <span>Conectado con 147628539 (Administrador) (Identidad confirmada).</span>
        <StatusEnd>
          <span>00:24</span>
          <Icon name="play" w={15} h={14} />
          <Icon name="lock" w={12} h={14} />
          <Icon name="hourglass" w={10} h={14} />
          <Icon name="disk" w={12} h={14} />
        </StatusEnd>
      </StatusBar>
      <TaskBar>
        <SystemButtons />
        <TaskButtons apps={localApps} activeIndex={7} />
        <Tray $gap={7} $end={24}>
          <TrayPeople><Icon name="people" w={16} /></TrayPeople>
          <Icon name="chevron" w={16} />
          <Icon name="sound" w={18} h={16} />
          <TrayTime>11:02 a.m.<br />8/08/2018</TrayTime>
          <Icon name="bubble" w={17} />
        </Tray>
      </TaskBar>
    </Page>
  );
}
